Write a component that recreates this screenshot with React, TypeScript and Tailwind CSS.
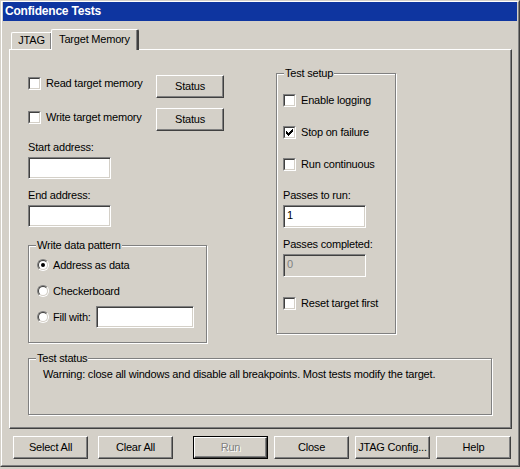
import React from "react";

type Kids = { children?: React.ReactNode; className?: string };

function Check({ checked }: { checked?: boolean }) {
  return (
    <div className="w-[13px] h-[13px] shrink-0 border border-t-[#808080] border-l-[#808080] border-b-white border-r-white">
      <div className="relative w-full h-full border border-t-[#404040] border-l-[#404040] border-b-[#d4d0c8] border-r-[#d4d0c8] bg-white">
        {checked && (
          <svg width="7" height="7" viewBox="0 0 7 7" className="absolute left-[1px] top-[1px]" shapeRendering="crispEdges">
            <g fill="#000">
              <rect x="6" y="0" width="1" height="1" />
              <rect x="5" y="1" width="2" height="1" />
              <rect x="0" y="2" width="1" height="1" />
              <rect x="4" y="2" width="3" height="1" />
              <rect x="0" y="3" width="2" height="1" />
              <rect x="3" y="3" width="3" height="1" />
              <rect x="0" y="4" width="5" height="1" />
              <rect x="1" y="5" width="3" height="1" />
              <rect x="2" y="6" width="1" height="1" />
            </g>
          </svg>
        )}
      </div>
    </div>
  );
}

function CheckRow({ label, checked, className = "" }: { label: string; checked?: boolean; className?: string }) {
  return (
    <div className={"flex items-start " + className}>
      <Check checked={checked} />
      <span className="ml-[5px] leading-[13px] whitespace-nowrap">{label}</span>
    </div>
  );
}

function Radio({ checked }: { checked?: boolean }) {
  return (
    <div className="w-[12px] h-[12px] shrink-0 rounded-full border border-t-[#808080] border-l-[#808080] border-b-white border-r-white">
      <div className="w-full h-full rounded-full border border-t-[#404040] border-l-[#404040] border-b-[#d4d0c8] border-r-[#d4d0c8] bg-white flex items-center justify-center">
        {checked && <div className="w-[4px] h-[4px] rounded-full bg-black" />}
      </div>
    </div>
  );
}

function Edit({ className = "", value, disabled }: { className?: string; value?: string; disabled?: boolean }) {
  return (
    <div
      className={
        "border border-t-[#808080] border-l-[#808080] border-b-white border-r-white shadow-[inset_1px_1px_0_#404040,inset_-1px_-1px_0_#d4d0c8] pt-[3px] pl-[3px] leading-[13px] " +
        (disabled ? "bg-[#d4d0c8] text-[#808080] " : "bg-white ") +
        className
      }
    >
      {value}
    </div>
  );
}

function Btn({ children, className = "", disabled, isDefault }: Kids & { disabled?: boolean; isDefault?: boolean }) {
  const face = (
    <div
      className={
        "w-full h-full border border-t-white border-l-white border-r-[#404040] border-b-[#404040] shadow-[inset_-1px_-1px_0_#808080] flex items-center justify-center leading-[13px] whitespace-nowrap " +
        (disabled ? "text-[#808080] [text-shadow:1px_1px_0_#fff]" : "")
      }
    >
      {children}
    </div>
  );
  if (isDefault) {
    return <div className={"border border-black " + className}>{face}</div>;
  }
  return <div className={className}>{face}</div>;
}

function Group({ label, className = "", children }: Kids & { label: string }) {
  return (
    <div className={"relative border border-[#808080] shadow-[inset_1px_1px_0_#fff,1px_1px_0_#fff] " + className}>
      <span className="absolute -top-[7px] left-[7px] px-[1px] bg-[#d4d0c8] leading-[13px] whitespace-nowrap">{label}</span>
      {children}
    </div>
  );
}

export default function App() {
  return (
    <div className="w-[520px] h-[469px] bg-[#d4d0c8] text-[11px] tracking-[-0.2px] text-black font-['Liberation_Sans',Arial,sans-serif] overflow-hidden select-none">
      <div className="w-[520px] h-[467px] border border-t-[#d4d0c8] border-l-[#d4d0c8] border-r-[#404040] border-b-[#404040]">
        <div className="h-full border border-t-white border-l-white border-r-[#808080] border-b-[#808080] px-[1px] flex flex-col">
          {/* Title bar */}
          <div className="h-[19px] bg-[#0e35a0] text-white font-bold text-[12px] leading-[19px] pl-[2px]">
            Confidence Tests
          </div>

          {/* Tabs */}
          <div className="ml-[6px] mt-[8px] h-[20px] flex items-end">
            <div className="ml-[2px] w-[42px] h-[17px] border-t border-l border-white border-r-2 border-r-[#404040] shadow-[inset_-1px_0_0_#808080] rounded-t-[2px] pt-[1px] text-center leading-[13px]">
              JTAG
            </div>
            <div className="relative z-10 -ml-[2px] -mb-[1px] w-[88px] h-[21px] bg-[#d4d0c8] border-t border-l border-white border-r-2 border-r-[#404040] shadow-[inset_-1px_0_0_#808080] rounded-t-[2px] pt-[3px] text-center leading-[13px] whitespace-nowrap">
              Target Memory
            </div>
          </div>

          {/* Panel */}
          <div className="ml-[6px] w-[503px] h-[380px] border border-t-white border-l-white border-r-[#404040] border-b-[#404040] shadow-[inset_-1px_-1px_0_#808080] pt-[23px] pl-[18px]">
            <div className="flex">
              {/* Left column */}
              <div className="w-[248px] pt-[2px] flex flex-col">
                <div className="flex items-start h-[23px]">
                  <CheckRow label="Read target memory" className="w-[128px] pt-[2px]" />
                  <Btn className="w-[68px] h-[23px]">Status</Btn>
                </div>
                <div className="mt-[10px] flex items-start h-[23px]">
                  <CheckRow label="Write target memory" className="w-[128px] pt-[3px]" />
                  <Btn className="w-[68px] h-[23px]">Status</Btn>
                </div>
                <div className="mt-[10px] leading-[13px]">Start address:</div>
                <Edit className="mt-[3px] w-[83px] h-[22px]" />
                <div className="mt-[10px] leading-[13px]">End address:</div>
                <Edit className="mt-[3px] w-[83px] h-[22px]" />

                <Group label="Write data pattern" className="mt-[18px] w-[179px] h-[98px] pt-[13px] pl-[8px]">
                  <div className="flex items-center h-[12px]">
                    <Radio checked />
                    <span className="ml-[4px] leading-[13px] whitespace-nowrap">Address as data</span>
                  </div>
                  <div className="mt-[14px] flex items-center h-[12px]">
                    <Radio />
                    <span className="ml-[4px] leading-[13px] whitespace-nowrap">Checkerboard</span>
                  </div>
                  <div className="mt-[9px] flex items-center h-[22px]">
                    <Radio />
                    <span className="ml-[4px] w-[43px] leading-[13px] whitespace-nowrap">Fill with:</span>
                    <Edit className="w-[98px] h-[22px]" />
                  </div>
                </Group>
              </div>

              {/* Right column */}
              <Group label="Test setup" className="w-[120px] h-[261px] pt-[20px] pl-[6px] flex flex-col">
                <CheckRow label="Enable logging" />
                <CheckRow label="Stop on failure" checked className="mt-[19px]" />
                <CheckRow label="Run continuous" className="mt-[19px]" />
                <div className="mt-[18px] leading-[13px]">Passes to run:</div>
                <Edit className="mt-[3px] w-[83px] h-[23px]" value="1" />
                <div className="mt-[10px] leading-[13px]">Passes completed:</div>
                <Edit className="mt-[3px] w-[83px] h-[23px]" value="0" disabled />
                <CheckRow label="Reset target first" className="mt-[20px]" />
              </Group>
            </div>

            <Group label="Test status" className="mt-[15px] w-[464px] h-[57px] pt-[9px] pl-[14px]">
              <div className="leading-[13px] whitespace-nowrap">
                Warning: close all windows and disable all breakpoints. Most tests modify the target.
              </div>
            </Group>
          </div>

          {/* Bottom buttons */}
          <div className="mt-[7px] flex">
            <Btn className="ml-[10px] w-[75px] h-[23px]">Select All</Btn>
            <Btn className="ml-[10px] w-[75px] h-[23px]">Clear All</Btn>
            <Btn className="ml-[20px] w-[75px] h-[23px]" disabled isDefault>
              Run
            </Btn>
            <Btn className="ml-[6px] w-[75px] h-[23px]">Close</Btn>
            <Btn className="ml-[6px] w-[75px] h-[23px]">JTAG Config...</Btn>
            <Btn className="ml-[6px] w-[75px] h-[23px]">Help</Btn>
          </div>
        </div>
      </div>
    </div>
  );
}
